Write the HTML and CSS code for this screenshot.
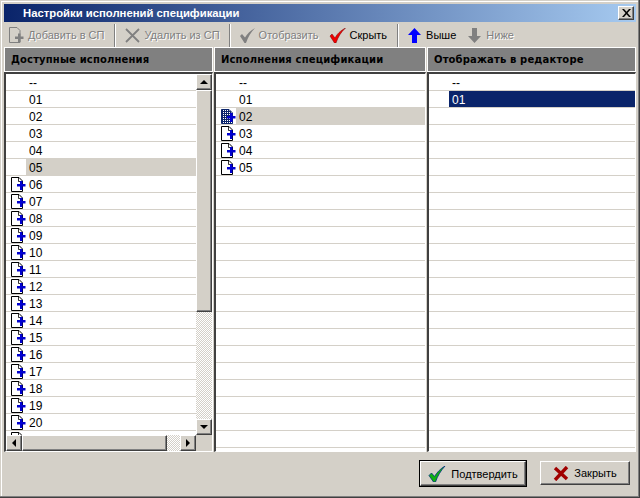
FILE: index.html
```html
<!DOCTYPE html>
<html lang="ru">
<head>
<meta charset="utf-8">
<title>Настройки исполнений спецификации</title>
<link rel="stylesheet" href="styles.css">
</head>
<body>
<svg class="defs" width="0" height="0" aria-hidden="true">
  <defs>
    <pattern id="dots" width="2" height="2" patternUnits="userSpaceOnUse">
      <rect width="2" height="2" fill="#0a246a"/>
      <rect width="1" height="1" fill="#fff"/>
    </pattern>
  </defs>
  <symbol id="doc" viewBox="0 0 17 16">
    <path d="M2.500 1.500H10L13.500 5V15.500H2.500Z" fill="#fff" stroke="#000"/>
    <path d="M9.500 1.500V5.500H13.500" fill="none" stroke="#000" stroke-width=".8"/>
    <path d="M11 5h2.500v3H16.500v2.500h-3v3.500H11V10.500H8V8h3Z" fill="#0000d0"/>
  </symbol>
  <symbol id="docsel" viewBox="0 0 17 16">
    <rect width="17" height="16" fill="#fff"/>
    <path d="M2.500 1.500H10L13.500 5V15.500H2.500Z" fill="url(#dots)" stroke="#0a246a"/>
    <path d="M11 5h2.500v3H16.500v2.500h-3v3.500H11V10.500H8V8h3Z" fill="#0000d0"/>
  </symbol>
</svg>
<div class="window">
  <header class="titlebar">
    <span class="title">Настройки исполнений спецификации</span>
    <span class="close"><svg width="9" height="8" viewBox="0 0 9 8"><path d="M0 0h2l2.500 2.700L7 0h2L5.500 4 9 8H7L4.500 5.300 2 8H0l3.500-4Z" fill="#000"/></svg></span>
  </header>
  <nav class="toolbar">
    <span class="tool tool-add off">
      <svg width="17" height="16" viewBox="0 0 17 16"><path d="M1.500.5H9L12 3.500V15.500H1.500Z" fill="#d4d0c8" stroke="#808080"/><path d="M10 6.500h2.500V9.500H15.500v2.500h-3V15H10V12H7V9.500H10Z" fill="#808080"/></svg>
      Добавить в СП
    </span>
    <i class="sep sep-1"></i>
    <span class="tool tool-del off">
      <svg width="15" height="15" viewBox="0 0 15 15"><path d="M1 1 14 14M14 1 1 14" stroke="#808080" stroke-width="1.800" fill="none"/></svg>
      Удалить из СП
    </span>
    <i class="sep sep-2"></i>
    <span class="tool tool-show off">
      <svg width="17" height="15" viewBox="0 0 17 15"><path d="M1 8 3 6 6 9.500C8 6 11 3 16 0 12 4 9 9 7 15H5.500Z" fill="#808080"/></svg>
      Отобразить
    </span>
    <span class="tool tool-hide">
      <svg width="17" height="15" viewBox="0 0 17 15"><path d="M1 8 3 6 6 10C8 6 11 3 16.500 0 12 4 9 9 7 15H5.500Z" fill="#f00000" stroke="#700" stroke-width=".5"/></svg>
      Скрыть
    </span>
    <i class="sep sep-3"></i>
    <span class="tool tool-up">
      <svg width="13" height="15" viewBox="0 0 13 15"><path d="M6.500 0 13 7H9V15H4V7H0Z" fill="#0000ff"/></svg>
      Выше
    </span>
    <span class="tool tool-down off">
      <svg width="13" height="15" viewBox="0 0 13 15"><path d="M6.500 15 13 8H9V0H4V8H0Z" fill="#808080"/></svg>
      Ниже
    </span>
  </nav>
  <main class="panes">
    <section class="pane pane-left">
      <h2 class="pane-head">Доступные исполнения</h2>
      <div class="frame frame-scroll">
        <ul class="list">
          <li class="row"><span class="ico"></span><span class="lbl">--</span></li>
          <li class="row"><span class="ico"></span><span class="lbl">01</span></li>
          <li class="row"><span class="ico"></span><span class="lbl">02</span></li>
          <li class="row"><span class="ico"></span><span class="lbl">03</span></li>
          <li class="row"><span class="ico"></span><span class="lbl">04</span></li>
          <li class="row grey"><span class="ico"></span><span class="lbl">05</span></li>
          <li class="row"><span class="ico"><svg class="d"><use href="#doc"/></svg></span><span class="lbl">06</span></li>
          <li class="row"><span class="ico"><svg class="d"><use href="#doc"/></svg></span><span class="lbl">07</span></li>
          <li class="row"><span class="ico"><svg class="d"><use href="#doc"/></svg></span><span class="lbl">08</span></li>
          <li class="row"><span class="ico"><svg class="d"><use href="#doc"/></svg></span><span class="lbl">09</span></li>
          <li class="row"><span class="ico"><svg class="d"><use href="#doc"/></svg></span><span class="lbl">10</span></li>
          <li class="row"><span class="ico"><svg class="d"><use href="#doc"/></svg></span><span class="lbl">11</span></li>
          <li class="row"><span class="ico"><svg class="d"><use href="#doc"/></svg></span><span class="lbl">12</span></li>
          <li class="row"><span class="ico"><svg class="d"><use href="#doc"/></svg></span><span class="lbl">13</span></li>
          <li class="row"><span class="ico"><svg class="d"><use href="#doc"/></svg></span><span class="lbl">14</span></li>
          <li class="row"><span class="ico"><svg class="d"><use href="#doc"/></svg></span><span class="lbl">15</span></li>
          <li class="row"><span class="ico"><svg class="d"><use href="#doc"/></svg></span><span class="lbl">16</span></li>
          <li class="row"><span class="ico"><svg class="d"><use href="#doc"/></svg></span><span class="lbl">17</span></li>
          <li class="row"><span class="ico"><svg class="d"><use href="#doc"/></svg></span><span class="lbl">18</span></li>
          <li class="row"><span class="ico"><svg class="d"><use href="#doc"/></svg></span><span class="lbl">19</span></li>
          <li class="row"><span class="ico"><svg class="d"><use href="#doc"/></svg></span><span class="lbl">20</span></li>
          <li class="row"><span class="ico"><svg class="d"><use href="#doc"/></svg></span></li>
        </ul>
        <div class="vbar">
          <span class="sbtn"><b class="arr arr-up"></b></span>
          <span class="thumb vthumb"></span>
          <span class="track"></span>
          <span class="sbtn"><b class="arr arr-down"></b></span>
        </div>
        <div class="hbar">
          <span class="sbtn"><b class="arr arr-left"></b></span>
          <span class="thumb hthumb"></span>
          <span class="track"></span>
          <span class="sbtn"><b class="arr arr-right"></b></span>
        </div>
        <div class="corner"></div>
      </div>
    </section>
    <section class="pane pane-mid">
      <h2 class="pane-head">Исполнения спецификации</h2>
      <div class="frame">
        <ul class="list">
          <li class="row"><span class="ico"></span><span class="lbl">--</span></li>
          <li class="row"><span class="ico"></span><span class="lbl">01</span></li>
          <li class="row grey"><span class="ico"><svg class="d"><use href="#docsel"/></svg></span><span class="lbl">02</span></li>
          <li class="row"><span class="ico"><svg class="d"><use href="#doc"/></svg></span><span class="lbl">03</span></li>
          <li class="row"><span class="ico"><svg class="d"><use href="#doc"/></svg></span><span class="lbl">04</span></li>
          <li class="row"><span class="ico"><svg class="d"><use href="#doc"/></svg></span><span class="lbl">05</span></li>
          <li class="row"></li><li class="row"></li><li class="row"></li><li class="row"></li><li class="row"></li><li class="row"></li><li class="row"></li><li class="row"></li><li class="row"></li><li class="row"></li><li class="row"></li><li class="row"></li><li class="row"></li><li class="row"></li><li class="row"></li><li class="row"></li>
        </ul>
      </div>
    </section>
    <section class="pane pane-right">
      <h2 class="pane-head">Отображать в редакторе</h2>
      <div class="frame">
        <ul class="list">
          <li class="row"><span class="ico"></span><span class="lbl">--</span></li>
          <li class="row navy"><span class="ico"></span><span class="lbl">01</span></li>
          <li class="row"></li><li class="row"></li><li class="row"></li><li class="row"></li><li class="row"></li><li class="row"></li><li class="row"></li><li class="row"></li><li class="row"></li><li class="row"></li><li class="row"></li><li class="row"></li><li class="row"></li><li class="row"></li><li class="row"></li><li class="row"></li><li class="row"></li><li class="row"></li><li class="row"></li><li class="row"></li>
        </ul>
      </div>
    </section>
  </main>
  <footer class="actions">
    <button class="btn btn-ok" type="button">
      <svg width="18" height="16" viewBox="0 0 18 16"><path d="M1 9.500 3.500 7 6.500 10.500C9 6.500 12 3 17 0 12.500 5 9.500 10 7.500 16H5.500Z" fill="#10b010" stroke="#003080" stroke-width=".8"/></svg>
      Подтвердить
    </button>
    <button class="btn btn-close" type="button">
      <svg width="16" height="15" viewBox="0 0 16 15"><path d="M2 2 14 13M14 1 2 14" stroke="#a00000" stroke-width="3.400" fill="none"/></svg>
      Закрыть
    </button>
  </footer>
</div>
</body>
</html>
```
FILE: styles.css
```css
* { box-sizing: border-box; }
html, body { margin: 0; padding: 0; }
body { width: 640px; height: 498px; overflow: hidden; background: #d4d0c8; font: 12px "Liberation Sans", Arial, sans-serif; color: #000; }
.defs { position: absolute; }
.window {
  width: 640px; height: 498px; display: flex; flex-direction: column;
  background: #d4d0c8; padding: 4px 4px 2px;
  box-shadow: inset -1px -1px 0 #404040, inset -2px -2px 0 #808080, inset 1px 1px 0 #d4d0c8, inset 2px 2px 0 #fff;
}
.titlebar {
  height: 18px; flex: none; display: flex; align-items: center; justify-content: space-between;
  padding: 0 2px 0 19px; background: linear-gradient(90deg, #0a246a, #a6caf0);
  color: #fff; font: bold 11.300px "Liberation Sans", sans-serif;
}
.title { white-space: nowrap; }
.close {
  width: 16px; height: 14px; display: flex; align-items: center; justify-content: center;
  background: #d4d0c8; border: 1px solid; border-color: #fff #404040 #404040 #fff;
  box-shadow: inset -1px -1px 0 #808080;
}
.toolbar { height: 25px; flex: none; display: flex; align-items: center; padding: 1px 0 0 4px; }
.tool { display: flex; align-items: center; gap: 3px; white-space: nowrap; font-size: 11px; }
.off { color: #808080; text-shadow: 1px 1px 0 #fff; }
.sep { width: 2px; height: 23px; flex: none; background: #808080; border-right: 1px solid #fff; }
.sep-1 { margin-left: 10px; margin-right: 9px; }
.sep-2 { margin-left: 9px; margin-right: 8px; }
.sep-3 { margin-left: 10px; margin-right: 9px; }
.tool-del { gap: 4px; }
.tool-hide { margin-left: 10px; gap: 4px; }
.tool-up, .tool-down { gap: 5px; }
.tool-down { margin-left: 12px; }
.panes { flex: 1; min-height: 0; display: flex; gap: 1px; height: 405px; }
.pane { display: flex; flex-direction: column; min-width: 0; }
.pane-left { width: 209px; }
.pane-mid { width: 212px; }
.pane-right { width: 209px; }
.pane-head {
  margin: 0; height: 25px; flex: none; padding: 0 0 0 6px; display: flex; align-items: center;
  background: #808080; border: 1px solid #fff;
  font: bold 10px "DejaVu Sans", sans-serif; white-space: nowrap; letter-spacing: .15px;
}
.frame {
  flex: 1; min-height: 0; background: #fff; overflow: hidden;
  border-style: solid; border-width: 2px 1px 1px 2px; border-color: #404040 #fff #fff #404040;
}
.frame-scroll {
  display: grid; grid-template-columns: 1fr 16px; grid-template-rows: 1fr 16px;
}
.list { list-style: none; margin: 0; padding: 0; overflow: hidden; min-height: 0; min-width: 0; }
.row { height: 17px; display: flex; border-bottom: 1px solid #d4d0c8; background: #fff; }
.ico { width: 20px; flex: none; padding: 0 0 0 3px; background: #fff; }
.d { display: block; width: 17px; height: 16px; }
.lbl { flex: 1; padding: 2px 0 0 3px; line-height: 14px; }
.grey .lbl { background: #d4d0c8; }
.navy .lbl { background: #0a246a; color: #fff; }
.vbar { display: flex; flex-direction: column; background: #d4d0c8; }
.hbar { display: flex; background: #d4d0c8; }
.corner { background: #d4d0c8; }
.sbtn {
  width: 16px; height: 16px; flex: none; display: flex; align-items: center; justify-content: center;
  background: #d4d0c8; border: 1px solid; border-color: #fff #404040 #404040 #fff;
  box-shadow: inset -1px -1px 0 #808080;
}
.thumb { background: #d4d0c8; border: 1px solid; border-color: #fff #404040 #404040 #fff; box-shadow: inset -1px -1px 0 #808080; flex: none; }
.vthumb { height: 222px; }
.hthumb { width: 145px; }
.track { flex: 1; background: repeating-conic-gradient(#d4d0c8 0 25%, #fff 0 50%) 0 0 / 2px 2px; }
.arr { display: block; width: 0; height: 0; border: 4px solid transparent; }
.arr-up { border-bottom-color: #000; border-top-width: 0; }
.arr-down { border-top-color: #000; border-bottom-width: 0; }
.arr-left { border-right-color: #000; border-left-width: 0; }
.arr-right { border-left-color: #000; border-right-width: 0; }
.actions { height: 44px; flex: none; display: flex; align-items: flex-start; justify-content: flex-end; gap: 14px; padding: 9px 6px 0 0; }
.btn {
  display: flex; align-items: center; justify-content: center; gap: 5px; padding: 0; margin: 0;
  font: 11px "Liberation Sans", sans-serif; color: #000; background: #d4d0c8;
  border: 1px solid; border-color: #fff #404040 #404040 #fff; box-shadow: inset -1px -1px 0 #808080;
}
.btn-ok { width: 106px; height: 25px; outline: 1px solid #000; outline-offset: 0; }
.btn-close { width: 90px; height: 24px; }
```
